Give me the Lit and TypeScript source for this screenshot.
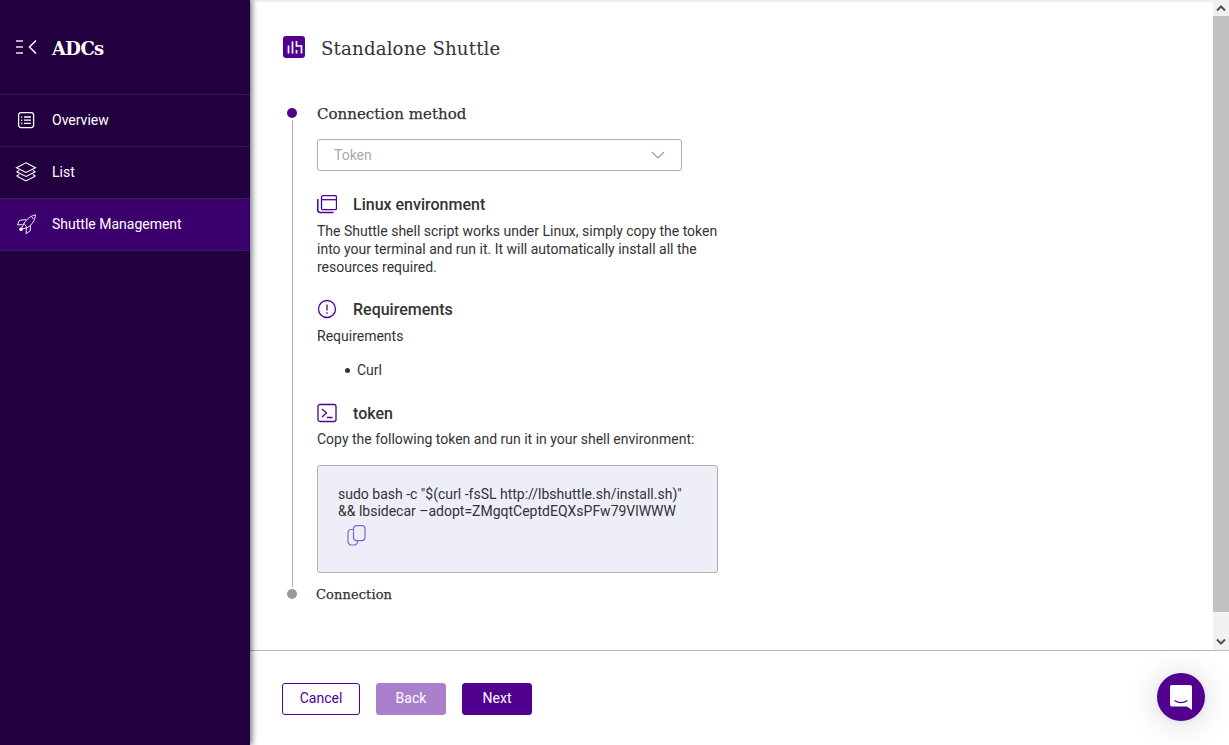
import { LitElement, html, css } from "lit";
import { customElement } from "lit/decorators.js";

const slab = css`"DejaVu Serif", "Liberation Serif", serif`;

@customElement("app-root")
export class AppRoot extends LitElement {
  static styles = css`
    :host { display: block; height: 745px; width: 100%; overflow: hidden; font-family: Roboto, sans-serif; color: #333; }
    * { box-sizing: border-box; }
    .app { display: flex; height: 745px; }
    .side { width: 250px; flex: none; background: #220040; color: #fff; box-shadow: 2px 0 6px rgba(0,0,0,.55); position: relative; z-index: 2; }
    .brand { height: 95px; display: flex; align-items: center; padding: 0 0 0 16px; border-bottom: 1px solid #2c2356; }
    .brand svg { margin-right: 14px; flex: none; }
    .brand b { font: 700 18px ${slab}; letter-spacing: -0.6px; position: relative; top: 1px; }
    .nav { height: 52px; display: flex; align-items: center; padding: 0 0 2px 16px; gap: 16px; font-size: 14px; border-bottom: 1px solid #2c2356; }
    .nav.on { background: #3c006e; }
    .nav svg { flex: none; width: 20px; overflow: visible; }
    .main { flex: 1; min-width: 0; display: flex; flex-direction: column; }
    .pane { height: 650px; flex: none; display: flex; box-shadow: inset 0 2px 2px rgba(0,0,0,.07); }
    .scroll { flex: 1; min-width: 0; overflow: hidden; padding: 32px 0 0 32px; }
    .bar { width: 16px; flex: none; display: flex; flex-direction: column; background: #f1f1f1; }
    .arrow { height: 16px; flex: none; display: flex; align-items: center; justify-content: center; }
    .thumb { height: 596px; flex: none; background: #c1c1c1; }
    .track { flex: 1; }
    .title { display: flex; align-items: center; gap: 16px; height: 32px; }
    .title h1 { margin: 0; font: 400 18.2px ${slab}; letter-spacing: 0.14px; color: #333; }
    .logo { width: 22px; height: 22px; border-radius: 3px; background: #52008f; flex: none; margin: -2px 0 0 1px; display: block; }
    .stepper { display: flex; margin-top: 39px; margin-left: 5px; }
    .rail { width: 10px; flex: none; display: flex; flex-direction: column; align-items: center; padding-top: 5px; margin-bottom: 5px; }
    .dot { width: 10px; height: 10px; border-radius: 50%; background: #52008f; flex: none; }
    .dot.grey { background: #999; }
    .line { width: 1px; flex: 1; background: #b0b0b0; margin: 2px 0; }
    .body { margin-left: 20px; width: 401px; display: flex; flex-direction: column; }
    h2 { margin: 0; font: 400 15px/22px ${slab}; letter-spacing: 0.03px; color: #333; -webkit-text-stroke: .25px #333; }
    .select { margin-top: 14px; width: 365px; height: 32px; border: 1px solid #b0b0b0; border-radius: 3px; display: flex; align-items: center; justify-content: space-between; padding: 0 16px; font-size: 14px; color: #aaa; }
    .sec { display: flex; align-items: center; height: 24px; gap: 16px; font-size: 16px; font-weight: 500; color: #333; }
    .sec svg { flex: none; }
    .gap21 { margin-top: 21px; }
    .gap22 { margin-top: 22px; }
    p { margin: 0; font-size: 14px; line-height: 18px; color: #333; }
    .m5 { margin-top: 5px; }
    .m6 { margin-top: 6px; }
    ul { margin: 16px 0 0; padding: 0 0 0 28px; font-size: 14px; line-height: 18px; list-style: none; }
    li { display: flex; align-items: center; gap: 7px; }
    li::before { content: ""; width: 5px; height: 5px; border-radius: 50%; background: #333; }
    .code { margin-top: 17px; height: 108px; background: #eeeef9; border: 1px solid #b0b0b0; border-radius: 3px; padding: 20px; font-size: 14px; line-height: 17px; }
    .code svg { display: block; margin: 5px 0 0 9px; }
    .last { margin-top: 13px; margin-left: -1px; font: 400 13px/18px ${slab}; letter-spacing: 0.1px; -webkit-text-stroke: .25px #333; }
    .foot { flex: 1; border-top: 1px solid #b8b8b8; display: flex; align-items: flex-start; gap: 16px; padding: 32px 0 0 32px; position: relative; }
    button { height: 32px; border-radius: 3px; font: 400 14px Roboto, sans-serif; border: 1px solid #52008f; background: #52008f; color: #fff; padding: 0 0 2px; }
    .cancel { width: 78px; background: #fff; color: #52008f; }
    .back { width: 70px; background: #aa80cc; border-color: #aa80cc; }
    .next { width: 70px; }
    .chat { position: absolute; left: 907px; top: 22px; width: 48px; height: 48px; border-radius: 50%; background: #52008f; display: flex; align-items: center; justify-content: center; box-shadow: 0 1px 6px rgba(0,0,0,.06), 0 2px 32px rgba(0,0,0,.16); }
  `;

  render() {
    return html`<div class="app">
      <aside class="side">
        <div class="brand">
          <svg width="22" height="16" viewBox="0 0 22 16" fill="none" stroke="#fff" stroke-width="1.5"><path d="M0 2h7M0 8h7M0 14h7" stroke="#e8e0f0"/><path d="M20 1.500 13.500 8l6.500 6.500"/></svg>
          <b>ADCs</b>
        </div>
        <div class="nav">
          <svg width="20" height="20" viewBox="0 0 20 20" fill="none" stroke="#fff" stroke-width="1.300"><rect x="2.600" y="2.600" width="15" height="15" rx="2.500"/><path d="M8 7h7M8 10.200h7M8 13.400h7"/><path d="M5.200 7h1M5.200 10.200h1M5.200 13.400h1" stroke-width="1.600"/></svg>
          Overview
        </div>
        <div class="nav">
          <svg width="20" height="20" viewBox="0 0 20 20" fill="none" stroke="#fff" stroke-width="1.100"><path d="M10 .8 19.500 5.800 10 10.500.5 5.800Z"/><path d="M.5 9.800 3.200 8.400M19.500 9.800 16.800 8.400M.5 9.800 10 14.500l9.500-4.700"/><path d="M.5 14 3.200 12.600M19.500 14 16.800 12.600M.5 14 10 19l9.500-5"/></svg>
          List
        </div>
        <div class="nav on">
          <svg width="20" height="20" viewBox="0 0 20 20" fill="none" stroke="#fff" stroke-width=".9"><path d="M19.500 .8c-4.500 1-8 3.500-11.500 8.500l3 4.500c5.500-3 8-8 8.500-13Z"/><path d="M10.500 5.600 3.500 6.300 1.500 10.800l5-.2M14.500 11.300l-.3 5.500-4.200 3 .5-6"/><path d="M15.500 2.500l2 2.600"/><circle cx="5" cy="15.300" r="1.400" fill="#fff"/><path d="M8 9.300l-3 6 6-1.500"/></svg>
          Shuttle Management
        </div>
      </aside>
      <main class="main">
        <div class="pane">
          <div class="scroll">
            <div class="title">
              <svg class="logo" viewBox="0 0 22 22" fill="none" stroke="#fff" stroke-width="1.700"><path d="M5.500 9.500v8M9.500 5.500v12M13.500 5v5h5v7.500M13.500 14v3.500"/></svg>
              <h1>Standalone Shuttle</h1>
            </div>
            <div class="stepper">
              <div class="rail">
                <div class="dot"></div><div class="line"></div><div class="dot grey"></div>
              </div>
              <div class="body">
                <h2>Connection method</h2>
                <div class="select">Token
                  <svg width="14" height="8" viewBox="0 0 14 8" fill="none" stroke="#999" stroke-width="1.100"><path d="M1 1l6 6 6-6"/></svg>
                </div>
                <div class="sec gap21">
                  <svg width="20" height="20" viewBox="0 0 20 20" fill="none" stroke="#52008f" stroke-width="1.300"><rect x="4.500" y="1.700" width="15" height="14" rx="1.500"/><path d="M4.500 5.700h15"/><path d="M.8 5v11a2.500 2.500 0 0 0 2.500 2.500h13.200" stroke-width="1.500"/></svg>
                  Linux environment
                </div>
                <p class="m6">The Shuttle shell script works under Linux, simply copy the token into your terminal and run it. It will automatically install all the resources required.</p>
                <div class="sec gap21">
                  <svg width="20" height="20" viewBox="0 0 20 20" fill="none" stroke="#52008f" stroke-width="1.300"><circle cx="10" cy="10" r="8.500"/><path d="M10 5.500v6M10 13.300v1.500"/></svg>
                  Requirements
                </div>
                <p class="m6">Requirements</p>
                <ul><li>Curl</li></ul>
                <div class="sec gap22">
                  <svg width="20" height="20" viewBox="0 0 20 20" fill="none" stroke="#52008f" stroke-width="1.300"><rect x="1" y="1.500" width="18" height="17" rx="2"/><path d="M5 6l4.500 4L5 14M10 14.500h5.500"/></svg>
                  token
                </div>
                <p class="m5">Copy the following token and run it in your shell environment:</p>
                <div class="code">
                  sudo bash -c "$(curl -fsSL http://lbshuttle.sh/install.sh)"<br>&amp;&amp; lbsidecar –adopt=ZMgqtCeptdEQXsPFw79VlWWW
                  <svg width="20" height="21" viewBox="0 0 20 21" fill="none" stroke="#7a68d8" stroke-width="1.200"><rect x="6.500" y=".6" width="11.500" height="15" rx="3"/><path d="M6.500 4.500H4a3 3 0 0 0-3 3v9a3.500 3.500 0 0 0 3.500 3.500H7a3.500 3.500 0 0 0 3.500-4.300"/></svg>
                </div>
                <div class="last">Connection</div>
              </div>
            </div>
          </div>
          <div class="bar">
            <div class="arrow"><svg width="10" height="8" viewBox="0 0 10 8" fill="none" stroke="#505050" stroke-width="2"><path d="M1 6.500l4-4 4 4"/></svg></div>
            <div class="thumb"></div>
            <div class="track"></div>
            <div class="arrow"><svg width="10" height="8" viewBox="0 0 10 8" fill="none" stroke="#505050" stroke-width="2"><path d="M1 1.500l4 4 4-4"/></svg></div>
          </div>
        </div>
        <div class="foot">
          <button class="cancel">Cancel</button>
          <button class="back">Back</button>
          <button class="next">Next</button>
          <div class="chat">
            <svg width="24" height="26" viewBox="0 0 24 26"><path fill="#fff" d="M3 1h18a2 2 0 0 1 2 2v23l-5-3.500H3a2 2 0 0 1-2-2V3a2 2 0 0 1 2-2Z"/><path d="M5.500 16.500c4 2.600 9 2.600 13 0" fill="none" stroke="#52008f" stroke-width="1.300"/></svg>
          </div>
        </div>
      </main>
    </div>`;
  }
}
